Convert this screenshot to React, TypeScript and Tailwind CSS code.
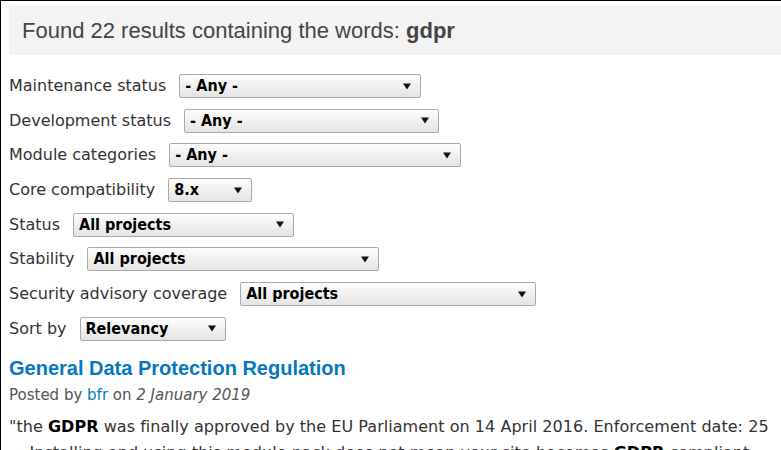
import React from "react";

const Arrow = () => (
  <svg width="8" height="7" viewBox="0 0 8 7" className="shrink-0">
    <path d="M0 0.5 H8 L4 6.5 Z" fill="#111" />
  </svg>
);

function Select({ value, width }: { value: string; width: number }) {
  return (
    <div
      className="flex h-[24px] items-center justify-between rounded-[2px] border border-[#a9a9a9] bg-gradient-to-b from-[#fdfdfd] to-[#e4e4e4] pl-[5px] pr-[9px] font-['DejaVu_Sans_Condensed','DejaVu_Sans',sans-serif] text-[16px] font-bold text-black [font-stretch:condensed]"
      style={{ width }}
    >
      <span className="leading-none">{value}</span>
      <Arrow />
    </div>
  );
}

const rows: { label: string; value: string; width: number }[] = [
  { label: "Maintenance status", value: "- Any -", width: 242 },
  { label: "Development status", value: "- Any -", width: 255 },
  { label: "Module categories", value: "- Any -", width: 292 },
  { label: "Core compatibility", value: "8.x", width: 84 },
  { label: "Status", value: "All projects", width: 221 },
  { label: "Stability", value: "All projects", width: 292 },
  { label: "Security advisory coverage", value: "All projects", width: 296 },
  { label: "Sort by", value: "Relevancy", width: 146 },
];

export default function App() {
  return (
    <div className="h-[450px] w-[781px] overflow-hidden border-l border-t border-black bg-white font-['DejaVu_Sans',sans-serif]">
      <div className="ml-[8px] mt-[4px] flex h-[50px] items-center bg-[#f3f3f3] pl-[13px] font-['Liberation_Sans',Arial,sans-serif] text-[22px] text-[#444]">
        <span>
          Found 22 results containing the words: <b className="font-bold">gdpr</b>
        </span>
      </div>
      <div className="ml-[8px] mt-[19px] flex flex-col">
        {rows.map((r) => (
          <div key={r.label} className="flex h-[34.7px] items-start">
            <span className="mr-[13px] mt-[2px] text-[16px] leading-[20px] text-[#333]">{r.label}</span>
            <Select value={r.value} width={r.width} />
          </div>
        ))}
      </div>
      <div className="ml-[8px] mt-[4px]">
        <h2 className="font-['Liberation_Sans',Arial,sans-serif] text-[20px] font-bold leading-[24px] text-[#0678be]">
          General Data Protection Regulation
        </h2>
        <div className="mt-[5px] text-[15px] leading-[20px] text-[#555]">
          Posted by <span className="text-[#0678be]">bfr</span> on <em>2 January 2019</em>
        </div>
        <p className="mt-[9px] whitespace-nowrap text-[16px] leading-[26px] tracking-[0.04px] text-[#333]">
          "the <b className="text-black">GDPR</b> was finally approved by the EU Parliament on 14 April 2016. Enforcement date: 25
          <br />
          ... Installing and using this module pack does not mean your site becomes <b className="text-black">GDPR</b> compliant.
        </p>
      </div>
    </div>
  );
}
